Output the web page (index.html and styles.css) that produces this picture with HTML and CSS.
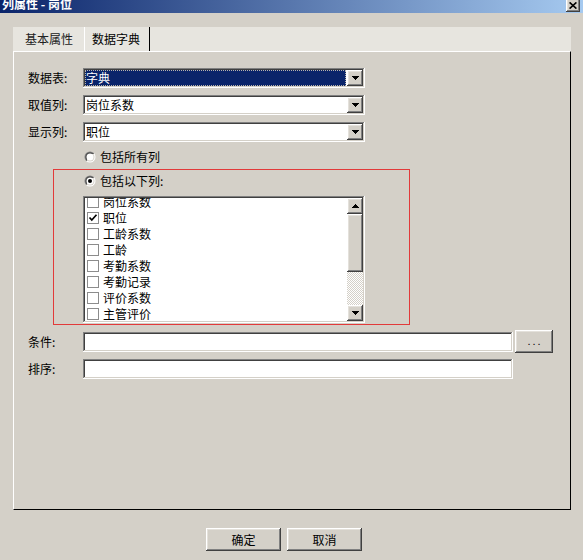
FILE: index.html
```html
<!DOCTYPE html>
<html>
<head>
<meta charset="utf-8">
<link rel="stylesheet" href="styles.css">
</head>
<body>
<div class="titlebar">
  <span class="title">列属性 - 岗位</span>
  <span class="close raised">
    <svg width="8" height="7" viewBox="0 0 8 7"><path d="M0.6 0.4 L7.4 6.6 M7.4 0.4 L0.6 6.6" stroke="#000" stroke-width="1.6" fill="none"/></svg>
  </span>
</div>

<div class="tabs">
  <div class="tabstrip">
    <div class="tab tab-plain">基本属性</div>
    <div class="tab tab-active">数据字典</div>
  </div>
  <div class="panel">
    <div class="row">
      <span class="label">数据表:</span>
      <div class="combo sunken">
        <div class="combo-value selected">字典</div>
        <div class="combo-btn raised"><svg width="7" height="4" viewBox="0 0 7 4"><path d="M0 0H7V1H6V2H5V3H4V4H3V3H2V2H1V1H0Z" fill="#000"/></svg></div>
      </div>
    </div>
    <div class="row row-next">
      <span class="label">取值列:</span>
      <div class="combo sunken">
        <div class="combo-value">岗位系数</div>
        <div class="combo-btn raised"><svg width="7" height="4" viewBox="0 0 7 4"><path d="M0 0H7V1H6V2H5V3H4V4H3V3H2V2H1V1H0Z" fill="#000"/></svg></div>
      </div>
    </div>
    <div class="row row-next">
      <span class="label">显示列:</span>
      <div class="combo sunken">
        <div class="combo-value">职位</div>
        <div class="combo-btn raised"><svg width="7" height="4" viewBox="0 0 7 4"><path d="M0 0H7V1H6V2H5V3H4V4H3V3H2V2H1V1H0Z" fill="#000"/></svg></div>
      </div>
    </div>

    <div class="radio-row radio-all">
      <svg class="radio" width="12" height="12" viewBox="0 0 12 12">
        <defs>
          <linearGradient id="rOuter" x1="0" y1="0" x2="1" y2="1"><stop offset="0.5" stop-color="#808080"/><stop offset="0.5" stop-color="#ffffff"/></linearGradient>
          <linearGradient id="rInner" x1="0" y1="0" x2="1" y2="1"><stop offset="0.5" stop-color="#404040"/><stop offset="0.5" stop-color="#d4d0c8"/></linearGradient>
        </defs>
        <circle cx="6" cy="6" r="5.5" fill="url(#rOuter)"/>
        <circle cx="6" cy="6" r="4.5" fill="url(#rInner)"/>
        <circle cx="6" cy="6" r="3.5" fill="#fff"/>
      </svg>
      <span>包括所有列</span>
    </div>

    <div class="redbox">
      <div class="radio-row radio-some">
        <svg class="radio" width="12" height="12" viewBox="0 0 12 12">
          <circle cx="6" cy="6" r="5.5" fill="url(#rOuter)"/>
          <circle cx="6" cy="6" r="4.5" fill="url(#rInner)"/>
          <circle cx="6" cy="6" r="3.5" fill="#fff"/>
          <circle cx="6" cy="6" r="2" fill="#000"/>
        </svg>
        <span>包括以下列:</span>
      </div>
      <div class="listbox sunken">
        <div class="list">
          <div class="items">
            <div class="item"><span class="check"></span><span>岗位系数</span></div>
            <div class="item"><span class="check"><svg width="10" height="10" viewBox="0 0 10 10"><path d="M1.5 4.5 L3.8 7 L8.5 1.8" stroke="#000" stroke-width="1.7" fill="none"/></svg></span><span>职位</span></div>
            <div class="item"><span class="check"></span><span>工龄系数</span></div>
            <div class="item"><span class="check"></span><span>工龄</span></div>
            <div class="item"><span class="check"></span><span>考勤系数</span></div>
            <div class="item"><span class="check"></span><span>考勤记录</span></div>
            <div class="item"><span class="check"></span><span>评价系数</span></div>
            <div class="item"><span class="check"></span><span>主管评价</span></div>
          </div>
        </div>
        <div class="scroll">
          <div class="sbtn raised"><svg width="7" height="4" viewBox="0 0 7 4"><path d="M3 0H4V1H5V2H6V3H7V4H0V3H1V2H2V1H3Z" fill="#000"/></svg></div>
          <div class="thumb raised"></div>
          <div class="track"></div>
          <div class="sbtn raised"><svg width="7" height="4" viewBox="0 0 7 4"><path d="M0 0H7V1H6V2H5V3H4V4H3V3H2V2H1V1H0Z" fill="#000"/></svg></div>
        </div>
      </div>
    </div>

    <div class="row-cond">
      <span class="label">条件:</span>
      <div class="input sunken input-wide"></div>
      <div class="dots raised">...</div>
    </div>
    <div class="row-sort">
      <span class="label">排序:</span>
      <div class="input sunken input-wide"></div>
    </div>
  </div>
</div>

<div class="actions">
  <div class="btn raised">确定</div>
  <div class="btn raised">取消</div>
</div>
</body>
</html>
```

FILE: styles.css
```css
* { box-sizing: border-box; }
html, body { margin: 0; padding: 0; }
body {
  width: 583px;
  height: 560px;
  overflow: hidden;
  background: #d4d0c8;
  color: #000;
  font-family: "Noto Sans CJK SC", "Liberation Sans", sans-serif;
  font-size: 12px;
  line-height: 1;
}

.raised {
  background: #d4d0c8;
  box-shadow: inset -1px -1px #404040, inset 1px 1px #ffffff, inset -2px -2px #808080, inset 2px 2px #e4e1db;
}
.sunken {
  background: #fff;
  box-shadow: inset -1px -1px #ffffff, inset 1px 1px #808080, inset -2px -2px #d4d0c8, inset 2px 2px #404040;
}

/* title bar */
.titlebar {
  height: 13px;
  overflow: hidden;
  display: flex;
  justify-content: space-between;
  align-items: flex-start;
  padding: 0 3px 0 2px;
  background: linear-gradient(to right, #0a246a, #a6caf0);
}
.title {
  color: #fff;
  font-weight: bold;
  line-height: 12px;
  margin-top: -2px;
  white-space: pre;
}
.close {
  width: 14px;
  height: 14px;
  margin-top: -2px;
  display: flex;
  align-items: center;
  justify-content: center;
  padding-top: 1px;
}

/* tabs */
.tabs {
  margin: 14px 0 0 13px;
  width: 558px;
}
.tabstrip {
  height: 24px;
  display: flex;
  background: #e7e5df;
}
.tab {
  height: 24px;
  display: flex;
  align-items: center;
  white-space: nowrap;
}
.tab-plain { width: 71px; padding-left: 12px; color: #222; }
.tab-active {
  width: 66px;
  padding-left: 7px;
  border-left: 1px solid #fff;
  border-right: 1px solid #000;
}
.panel {
  height: 459px;
  border-top: 1px solid #fff;
  border-left: 1px solid #fff;
  border-right: 1px solid #000;
  border-bottom: 1px solid #000;
  padding: 16px 0 0 14px;
}

/* field rows */
.row {
  display: flex;
  align-items: center;
  height: 20px;
}
.row-next { margin-top: 7px; }
.label { width: 55px; white-space: nowrap; }

.combo {
  width: 282px;
  height: 20px;
  padding: 2px;
  display: flex;
}
.combo-value {
  flex: 1;
  display: flex;
  align-items: center;
  padding-left: 1px;
  white-space: nowrap;
}
.combo-value.selected {
  background: #0a246a;
  color: #fff;
  margin-right: 1px;
  outline: 1px dotted #b8b4ac;
  outline-offset: -1px;
}
.combo-btn {
  width: 16px;
  height: 16px;
  display: flex;
  align-items: center;
  justify-content: center;
}

/* radios */
.radio-row {
  display: flex;
  align-items: center;
  gap: 4px;
  height: 16px;
}
.radio { display: block; flex: none; }
.radio-all { margin: 7px 0 0 56px; }
.radio-some { margin: 3px 0 0 30px; }

.redbox {
  margin: 4px 0 0 25px;
  width: 357px;
  height: 156px;
  border: 1px solid #e23a3a;
}

/* listbox */
.listbox {
  margin: 7px 0 0 29px;
  width: 282px;
  height: 127px;
  padding: 2px;
  display: flex;
}
.list {
  flex: 1;
  overflow: hidden;
}
.items { margin-top: -4px; }
.item {
  height: 16px;
  display: flex;
  align-items: center;
  gap: 4px;
  padding-left: 2px;
  white-space: nowrap;
}
.check {
  width: 12px;
  height: 12px;
  flex: none;
  border: 1px solid #8c8c8c;
  background: #fff;
  display: flex;
  align-items: center;
  justify-content: center;
}
.scroll {
  width: 16px;
  display: flex;
  flex-direction: column;
}
.sbtn {
  height: 16px;
  display: flex;
  align-items: center;
  justify-content: center;
}
.thumb { height: 58px; }
.track {
  flex: 1;
  background: repeating-conic-gradient(#d4d0c8 0 25%, #ffffff 0 50%) 0 0 / 2px 2px;
}

/* condition rows */
.row-cond {
  display: flex;
  align-items: center;
  height: 23px;
  margin-top: 5px;
}
.row-sort {
  display: flex;
  align-items: center;
  height: 20px;
  margin-top: 6px;
}
.input { height: 20px; }
.input-wide { width: 430px; }
.dots {
  width: 38px;
  height: 23px;
  margin-left: 2px;
  display: flex;
  align-items: center;
  justify-content: center;
  letter-spacing: 2px;
  padding-left: 2px;
  font-family: "Liberation Sans", sans-serif;
  font-size: 11px;
}

/* dialog buttons */
.actions {
  display: flex;
  gap: 6px;
  margin: 18px 0 0 206px;
}
.btn {
  width: 75px;
  height: 23px;
  display: flex;
  align-items: center;
  justify-content: center;
}
```
